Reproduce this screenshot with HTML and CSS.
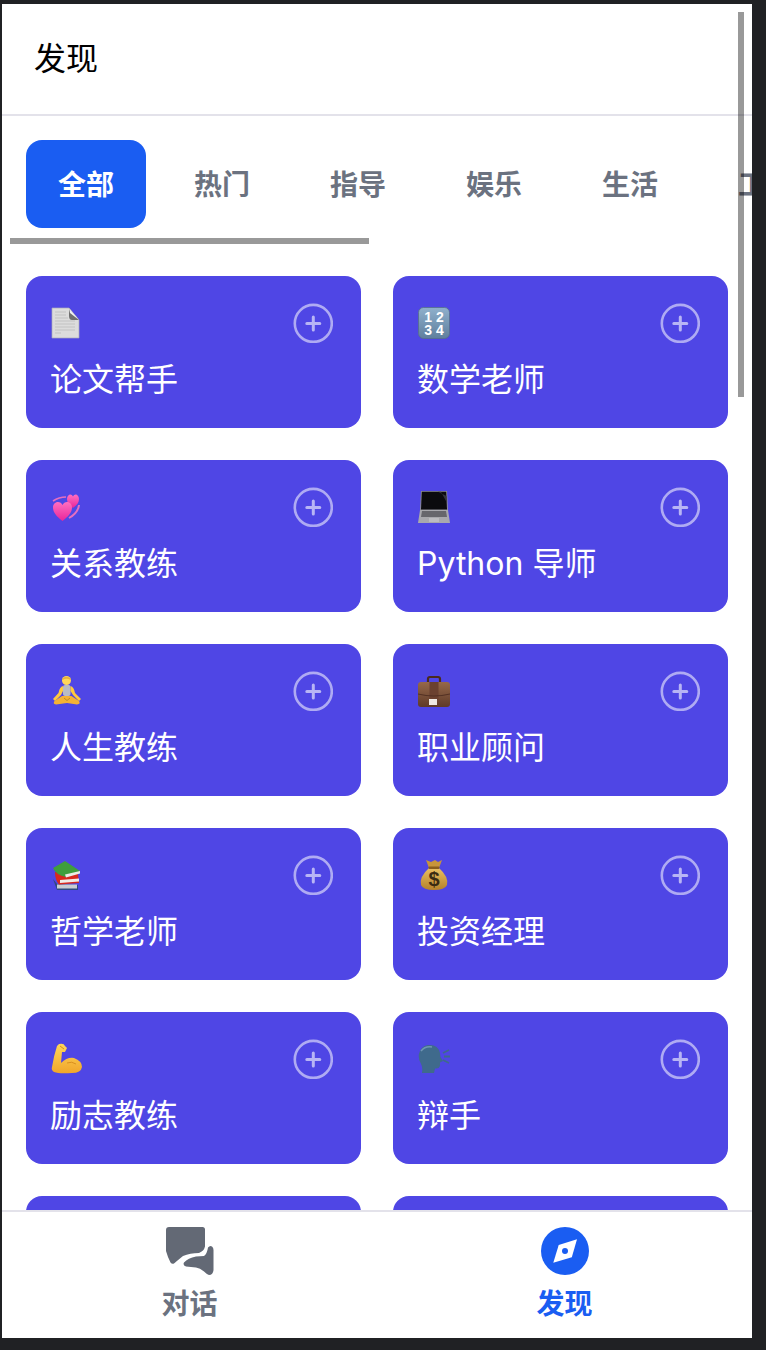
FILE: index.html
```html
<!DOCTYPE html>
<html lang="zh-CN">
<head>
<meta charset="utf-8">
<title>发现</title>
<link rel="stylesheet" href="styles.css">
</head>
<body>
<svg class="defs" width="0" height="0" aria-hidden="true">
  <defs>
    <linearGradient id="gPink" x1="0" y1="0" x2="0" y2="1"><stop offset="0" stop-color="#ff6fc0"/><stop offset="1" stop-color="#e8259a"/></linearGradient>
    <linearGradient id="gBlue" x1="0" y1="0" x2="0" y2="1"><stop offset="0" stop-color="#8fb0cc"/><stop offset="1" stop-color="#5f7f9d"/></linearGradient>
    <linearGradient id="gBrown" x1="0" y1="0" x2="0" y2="1"><stop offset="0" stop-color="#96684a"/><stop offset="1" stop-color="#5f3a28"/></linearGradient>
    <linearGradient id="gGold" x1="0" y1="0" x2="0" y2="1"><stop offset="0" stop-color="#e9bf62"/><stop offset="1" stop-color="#b5812a"/></linearGradient>
    <linearGradient id="gSkin" x1="0" y1="0" x2="0" y2="1"><stop offset="0" stop-color="#ffd75a"/><stop offset="1" stop-color="#f0a52a"/></linearGradient>

    <symbol id="e-doc" viewBox="0 0 32 32">
      <path d="M1 1H18L28 13V31H1Z" fill="#dcdcdc" stroke="#a9a9b8" stroke-width=".7"/>
      <path d="M4 5H15M4 8H15M4 11H17M4 14H24M4 17H24M4 20H24M4 23H24M4 26H10" stroke="#c2c2c2" stroke-width="1.2"/>
      <path d="M18 1L28 13H21Q18 13 18 9Z" fill="#6f6f6f"/>
      <path d="M18 1L28 13L19 6Z" fill="#f0f0f4"/>
    </symbol>

    <symbol id="e-num" viewBox="0 0 32 32">
      <rect x=".5" y=".5" width="31" height="31" rx="5" fill="url(#gBlue)" stroke="#55708a" stroke-width=".8"/>
      <text x="16" y="14.500" class="em-num">1 2</text>
      <text x="16" y="28" class="em-num">3 4</text>
    </symbol>

    <symbol id="e-hearts" viewBox="0 0 32 32">
      <path d="M2 10Q8 6 15 6" fill="none" stroke="#e56fc0" stroke-width="1.600"/>
      <path d="M28 14Q27 22 18 27" fill="none" stroke="#e56fc0" stroke-width="2"/>
      <path d="M22 17C18 14 16 11.500 16 8C16 5 18 3.500 19.200 3.500C20.500 3.500 21.400 4.200 22 5.500C22.600 4.200 23.500 3.500 24.800 3.500C26 3.500 28 5 28 8C28 11.500 26 14 22 17Z" fill="url(#gPink)"/>
      <path d="M11.500 30C5 25 2 21 2 16.500C2 12.500 5 11 7 11C9 11 10.500 12 11.500 14C12.500 12 14 11 16 11C18 11 21 12.500 21 16.500C21 21 18 25 11.500 30Z" fill="url(#gPink)"/>
    </symbol>

    <symbol id="e-laptop" viewBox="0 0 32 32">
      <path d="M3 0H29L30 19H2Z" fill="#8e8e96"/>
      <path d="M3.800 .8H28.200L29 18.500H3Z" fill="#0b0b0e"/>
      <path d="M20 .8H23L28.500 11V5Z" fill="#35353c"/>
      <path d="M2 19H30L32 32H0Z" fill="#a8a8ad"/>
      <path d="M4 20H28L29 26H3Z" fill="#66666c"/>
      <rect x="11" y="27" width="10" height="4" fill="#bcbcc0"/>
    </symbol>

    <symbol id="e-yoga" viewBox="0 0 32 32">
      <circle cx="15.500" cy="5.500" r="4.500" fill="#ffd75a"/>
      <path d="M11 4Q15.500 -.5 20 4L19.500 5Q15.500 2.500 11.500 5Z" fill="#e8b23e"/>
      <rect x="12" y="10" width="7.500" height="11" rx="2" fill="#b9bcc4"/>
      <path d="M12 11Q8.500 12 7.500 18L2 24L4 26L10 20L12 16Z" fill="#ffc93f"/>
      <path d="M19.500 11Q23 12 24 18L30 24L28 26L22 20L19.500 16Z" fill="#ffc93f"/>
      <path d="M11 21H20.500L28 26Q30 29 26 29.500L16 28L5 29.500Q1.500 29 3.500 26Z" fill="#f5b234"/>
      <path d="M13 23L16 25.500L19 23" fill="none" stroke="#b9892b" stroke-width="1"/>
    </symbol>

    <symbol id="e-case" viewBox="0 0 32 32">
      <path d="M10 8V4Q10 2 12 2H20Q22 2 22 4V8" fill="none" stroke="#4a2a1e" stroke-width="2.200"/>
      <rect x="0" y="7" width="32" height="25" rx="3" fill="url(#gBrown)"/>
      <rect x="11.500" y="7" width="9" height="18" fill="#6b4130"/>
      <path d="M0 19Q16 23 32 19" fill="none" stroke="#4a2a1e" stroke-width=".8"/>
      <rect x="11" y="24" width="8" height="6" fill="#efe9e2"/>
    </symbol>

    <symbol id="e-books" viewBox="0 0 32 32">
      <path d="M2 20L6 31H27L27 26L6 25Z" fill="#2f4a80"/>
      <path d="M6 25.500H26V29.500H6Z" fill="#c9ccd2"/>
      <path d="M4 13L27 15L28 24L8 25.500Q4 21 4 13Z" fill="#d8281e"/>
      <path d="M9 21L28 19.500V22.500L9 24Z" fill="#f1ece6"/>
      <path d="M2 9L14 2L29 12L15 18Q5 16 2 9Z" fill="#3f9e3c"/>
      <path d="M14 15.500L29 12V14.500L15 18.500Z" fill="#e9ece6"/>
    </symbol>

    <symbol id="e-money" viewBox="0 0 32 32">
      <path d="M8 1L13 3L17 1L20 3L24 1L21 9H11Z" fill="#c8953a"/>
      <path d="M11 9H21Q31 18 29 26Q27 31 16 31Q5 31 3 26Q1 18 11 9Z" fill="url(#gGold)"/>
      <rect x="10.500" y="7.500" width="11" height="2.500" rx="1" fill="#8a5e1c"/>
      <text x="16" y="27" class="em-dollar">$</text>
    </symbol>

    <symbol id="e-arm" viewBox="0 0 32 32">
      <path d="M8 1Q13 0 14 3L16 5L14 9L11 9L10 20Q16 14 23 15Q31 18 31 24Q30 30 21 30Q8 31 3 29Q0 27 1 24Q3 12 6 3Z" fill="url(#gSkin)"/>
      <path d="M16 20Q21 18 25 21" fill="none" stroke="#d98f1e" stroke-width="1"/>
      <path d="M9 3L13 6" stroke="#d98f1e" stroke-width="1"/>
    </symbol>

    <symbol id="e-head" viewBox="0 0 32 32">
      <path d="M10 2Q20 1 22 10L22.500 14L25 18L22 19.500V23Q21 26 17 25.500L16 30H4Q5 24 3 21Q-1 14 2 8Q4 3 10 2Z" fill="#3f6a8c"/>
      <path d="M3 8Q7 3 14 4" fill="none" stroke="#6f96b3" stroke-width="1.500"/>
      <path d="M25 10L31 7M26 13.500L32 13.500M25 17L31 20" stroke="#3f6a8c" stroke-width="1.800" fill="none"/>
    </symbol>

    <symbol id="i-plus" viewBox="0 0 40 40">
      <circle cx="20.300" cy="20.400" r="18.500" fill="none" stroke="#fff" stroke-opacity=".55" stroke-width="2.600"/>
      <path d="M20.300 14V27M13.800 20.400H26.800" stroke="#fff" stroke-opacity=".6" stroke-width="3" stroke-linecap="round"/>
    </symbol>
  </defs>
</svg>

<div class="app">
  <header class="topbar"><h1 class="page-title">发现</h1></header>

  <main class="content">
    <nav class="tabs">
      <button class="tab tab-active">全部</button>
      <button class="tab">热门</button>
      <button class="tab">指导</button>
      <button class="tab">娱乐</button>
      <button class="tab">生活</button>
      <button class="tab">工作</button>
    </nav>

    <section class="grid">
      <article class="card"><div class="card-top"><svg class="emoji"><use href="#e-doc"/></svg><svg class="plus"><use href="#i-plus"/></svg></div><h2 class="card-title">论文帮手</h2></article>
      <article class="card"><div class="card-top"><svg class="emoji"><use href="#e-num"/></svg><svg class="plus"><use href="#i-plus"/></svg></div><h2 class="card-title">数学老师</h2></article>
      <article class="card"><div class="card-top"><svg class="emoji"><use href="#e-hearts"/></svg><svg class="plus"><use href="#i-plus"/></svg></div><h2 class="card-title">关系教练</h2></article>
      <article class="card"><div class="card-top"><svg class="emoji"><use href="#e-laptop"/></svg><svg class="plus"><use href="#i-plus"/></svg></div><h2 class="card-title">Python 导师</h2></article>
      <article class="card"><div class="card-top"><svg class="emoji"><use href="#e-yoga"/></svg><svg class="plus"><use href="#i-plus"/></svg></div><h2 class="card-title">人生教练</h2></article>
      <article class="card"><div class="card-top"><svg class="emoji"><use href="#e-case"/></svg><svg class="plus"><use href="#i-plus"/></svg></div><h2 class="card-title">职业顾问</h2></article>
      <article class="card"><div class="card-top"><svg class="emoji"><use href="#e-books"/></svg><svg class="plus"><use href="#i-plus"/></svg></div><h2 class="card-title">哲学老师</h2></article>
      <article class="card"><div class="card-top"><svg class="emoji"><use href="#e-money"/></svg><svg class="plus"><use href="#i-plus"/></svg></div><h2 class="card-title">投资经理</h2></article>
      <article class="card"><div class="card-top"><svg class="emoji"><use href="#e-arm"/></svg><svg class="plus"><use href="#i-plus"/></svg></div><h2 class="card-title">励志教练</h2></article>
      <article class="card"><div class="card-top"><svg class="emoji"><use href="#e-head"/></svg><svg class="plus"><use href="#i-plus"/></svg></div><h2 class="card-title">辩手</h2></article>
      <article class="card"></article>
      <article class="card"></article>
    </section>
  </main>

  <footer class="bottom-nav">
    <div class="nav-item">
      <svg class="nav-icon" viewBox="0 0 48 48"><path fill="#636975" d="M3 0H36.500Q39 0 39 2.500V19.500Q38 24 33 26Q24 26 17 29Q12 33 8 36.500Q6 37.500 4.500 35.500Q2 31 0 24V3Q0 0 3 0Z"/><path fill="#636975" d="M42 20.500Q44 18 46 19.500Q47.500 20.500 47.500 23V43Q47 48 43 48Q41 47.500 38 44.500Q34 41 30 40.500L20 39.500Q16.500 38 18 35.500Q22 31 30 29.500L38 29Q41 27 42 20.500Z"/></svg>
      <span class="nav-label">对话</span>
    </div>
    <div class="nav-item nav-item-active">
      <svg class="nav-icon" viewBox="0 0 48 48"><circle cx="24" cy="24" r="24" fill="#1a5df2"/><path fill="#fff" d="M36 12.300L30.800 30.300L12.300 35.700L17.700 18Z"/><circle cx="24" cy="24" r="3" fill="#1a5df2"/></svg>
      <span class="nav-label">发现</span>
    </div>
  </footer>

  <div class="scroll-v"></div>
  <div class="scroll-h"></div>
</div>
</body>
</html>
```
FILE: styles.css
```css
* {
  box-sizing: border-box;
}

html,
body {
  margin: 0;
  padding: 0;
  background: #202124;
}

body {
  width: 766px;
  height: 1350px;
  overflow: hidden;
  font-family: Inter, "Noto Sans CJK SC", sans-serif;
}

.defs {
  position: absolute;
}

.app {
  position: relative;
  display: flex;
  flex-direction: column;
  width: 750px;
  height: 1334px;
  margin: 4px 0 0 2px;
  background: #fff;
  overflow: hidden;
}

.topbar {
  flex: none;
  display: flex;
  align-items: center;
  height: 112px;
  padding: 0 32px;
  border-bottom: 2px solid #e3e2ea;
}

.page-title {
  margin: 0;
  font-size: 32px;
  font-weight: 400;
  line-height: 44px;
  color: #000;
}

.content {
  flex: 1;
  min-height: 0;
  overflow: hidden;
}

.tabs {
  display: flex;
  gap: 16px;
  padding: 24px 0 0 24px;
  overflow: hidden;
}

.tab {
  flex: none;
  width: 120px;
  height: 88px;
  padding: 0 0 2px;
  border: 0;
  border-radius: 16px;
  background: transparent;
  font-family: inherit;
  font-size: 28px;
  font-weight: 600;
  color: #6b7280;
}

.tab-active {
  background: #1a5df2;
  color: #fff;
}

.grid {
  display: grid;
  grid-template-columns: 335px 335px;
  gap: 32px;
  padding: 48px 0 0 24px;
}

.card {
  height: 152px;
  padding: 27px 28px 26px 24px;
  border-radius: 16px;
  background: #4f46e5;
}

.card-top {
  display: flex;
  align-items: center;
  justify-content: space-between;
  height: 40px;
}

.emoji {
  width: 32px;
  height: 32px;
  margin-left: 1px;
}

.plus {
  width: 40px;
  height: 40px;
}

.em-num {
  font-family: "Liberation Sans", sans-serif;
  font-size: 14px;
  font-weight: 700;
  text-anchor: middle;
  fill: #fff;
}

.em-dollar {
  font-family: "Liberation Sans", sans-serif;
  font-size: 20px;
  font-weight: 700;
  text-anchor: middle;
  fill: #3a2a12;
}

.card-title {
  margin: 15px 0 0;
  font-size: 32px;
  font-weight: 400;
  line-height: 44px;
  color: #fff;
  white-space: nowrap;
}

.bottom-nav {
  flex: none;
  display: grid;
  grid-template-columns: 1fr 1fr;
  height: 128px;
  padding-top: 15px;
  border-top: 2px solid #e3e2ea;
  background: #fff;
}

.nav-item {
  display: flex;
  flex-direction: column;
  align-items: center;
  gap: 9px;
  color: #6b7280;
}

.nav-item-active {
  color: #1a5df2;
}

.nav-icon {
  width: 48px;
  height: 48px;
}

.nav-label {
  font-size: 28px;
  font-weight: 600;
  line-height: 40px;
}

.scroll-v {
  position: absolute;
  top: 8px;
  left: 736px;
  width: 6px;
  height: 385px;
  background: rgba(0, 0, 0, 0.4);
}

.scroll-h {
  position: absolute;
  top: 234px;
  left: 8px;
  width: 359px;
  height: 6px;
  background: rgba(0, 0, 0, 0.4);
}
```
